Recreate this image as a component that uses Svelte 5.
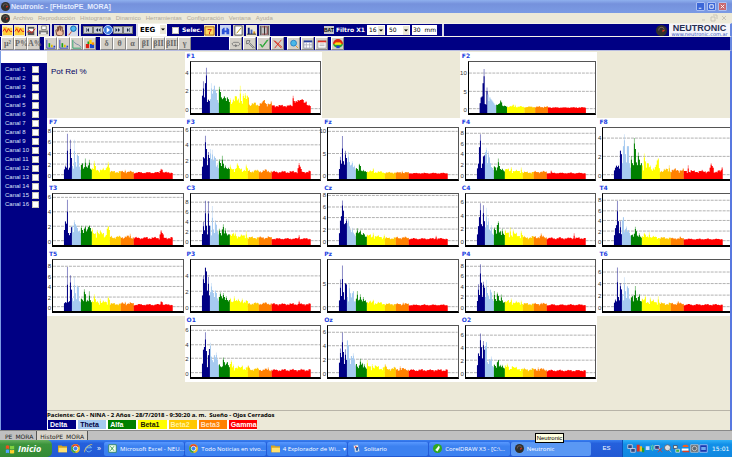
<script lang="ts">
	type Shape = [d: string, fill: string, stroke?: string];

	interface Channel {
		name: string;
		scale: number;
		step: number;
		low: string;
		tail: number[];
		peaks?: Record<number, number>;
	}

	const bands = [
		{ name: 'Delta', color: '#000084', text: '#ffffff', size: 8 },
		{ name: 'Theta', color: '#a6caf0', text: '#000040', size: 9 },
		{ name: 'Alfa', color: '#008000', text: '#ffffff', size: 11 },
		{ name: 'Beta1', color: '#ffff00', text: '#202000', size: 18 },
		{ name: 'Beta2', color: '#ffc800', text: '#fff3a0', size: 11 },
		{ name: 'Beta3', color: '#ff8000', text: '#ffe0c0', size: 13 },
		{ name: 'Gamma', color: '#ff0000', text: '#ffffff', size: 39 }
	];

	// scale is pixels per unit, low holds the delta, theta and alfa bins,
	// tail the mean level of beta1, beta2, beta3 and gamma
	const channels: (Channel | null)[] = [
		null,
		{ name: 'F1', scale: 9.3, step: 2, low: '1.4 3 1.2 2.8 4.5 .7 1 .8 1 2.8 1.6 2.1 2.5 2 1.7 .9 .6 2.4 1.8 1.2 1 1.1 1.3 1.1 .8 1.2 1 .7', tail: [1, 0.5, 0.6, 0.3], peaks: { 38: 2.5, 41: 1.6, 43: 1.7, 45: 1.4, 46: 1.2, 62: 0.9, 91: 1.4, 92: 0.8, 93: 0.6, 94: 0.8, 95: 0.7, 96: 0.9, 97: 0.8, 98: 0.9, 99: 0.9, 100: 1, 101: 0.9, 102: 0.6, 103: 0.6, 104: 0.8 } },
		null,
		{ name: 'F2', scale: 3.7, step: 5, low: '1.4 3 3.3 7 11 1.2 1 5.8 3.8 2 3 2.5 2.2 1.8 1.4 1 .8 1 .9 1.2 1.3 2.3 1.6 .7 .5 .7 .6 .4', tail: [0.5, 0.4, 0.4, 0.2], peaks: { 34: 1.1, 36: 1 } },
		null,
		{ name: 'F7', scale: 5.6, step: 2, low: '.9 1.6 1.2 7.5 .8 1.2 6.4 3 1.5 1 6.4 2.2 1.4 3.6 3.4 1.4 .8 1.7 2 1 1.3 2.9 1.4 1.2 1.6 2.7 1 .8', tail: [0.9, 0.5, 0.5, 0.35], peaks: { 30: 2.5, 31: 1.5, 42: 1.1, 44: 2.3, 43: 1.4, 45: 1.2, 61: 0.8, 96: 0.6, 97: 1, 98: 0.8 } },
		{ name: 'F3', scale: 7.7, step: 2, low: '1 2.3 2.1 5.2 3.4 1.2 3 2.2 3.4 2 3.3 1.8 2.4 2.2 1 1.5 .8 2 1.5 1.1 2.5 1.4 .8 1.2 .8 .7 .9 .7', tail: [0.8, 0.5, 0.5, 0.35], peaks: { 35: 1.5, 44: 1.3, 96: 0.8, 97: 1.5, 98: 1, 99: 0.7 } },
		{ name: 'Fz', scale: 4.5, step: 5, low: '1.2 4 2.4 8.8 3 2.2 5.4 3.7 2.7 5.2 2.8 2 2.2 3 1.6 2 1 1.4 1.2 .8 2.4 1.9 .8 .7 1 .6 .7 .5', tail: [0.6, 0.4, 0.4, 0.25], peaks: { 34: 1.4, 63: 0.8 } },
		{ name: 'F4', scale: 5.4, step: 2, low: '1.1 2 5.2 7.7 1.2 2 3.4 3.6 4.2 5.1 2.1 4.4 3.2 2.1 1.4 1.2 .8 1.6 1.3 .7 1.3 3 1.6 1 .8 1.1 .7 .5', tail: [0.7, 0.4, 0.5, 0.25], peaks: { 34: 1.4, 44: 1.3, 29: 1, 74: 0.7 } },
		{ name: 'F8', scale: 9.4, step: 2, low: '.4 .7 1 .8 1 .6 2.6 2.2 1.2 3.1 4.4 2.2 1.3 3.1 3.1 1.2 .7 2 1.2 1 4 2.8 1.3 1 2.4 1.6 1 1.2', tail: [0.9, 0.5, 0.5, 0.35], peaks: { 30: 2.3, 31: 1.4, 44: 1.8, 43: 1.5, 55: 1, 74: 1, 96: 0.7, 97: 1.2, 98: 0.9, 99: 0.7, 108: 0.8 } },
		{ name: 'T3', scale: 7.5, step: 2, low: '1.4 2.6 2.3 5.6 1 .7 1 1.8 2 1.1 2.8 2.2 2 1.7 1.2 1.3 1 2 1.4 1 1.6 2 1.2 1.5 1.8 2 1.7 1.2', tail: [1, 0.5, 0.5, 0.35], peaks: { 33: 1.4, 44: 1.9, 43: 1.6, 45: 1.4, 66: 0.9, 96: 0.8, 97: 1.4, 98: 1, 99: 0.8 } },
		{ name: 'C3', scale: 5, step: 2, low: '1.3 3.8 2 8.2 3 1.2 8.1 3 3 1 7.1 2.2 1.5 4.2 3.2 1.8 1.2 2.4 1.5 1 2.2 3.3 1.4 2.5 1.4 1 1.2 1.2', tail: [1, 0.6, 0.6, 0.35], peaks: { 44: 1.9, 33: 1.6, 97: 1.1 } },
		{ name: 'Cz', scale: 5.9, step: 2, low: '1.2 3.4 4.2 7 5.2 2.8 3 3.8 3 3.8 2.4 1.8 1.4 2.2 1.3 1 .7 1.3 2.1 1.2 1.4 1.8 1 .9 1.2 1 .6 .6', tail: [0.7, 0.4, 0.5, 0.3], peaks: { 34: 1.3, 45: 1, 97: 0.8 } },
		{ name: 'C4', scale: 6.6, step: 2, low: '.9 2.2 3.6 5.8 2.5 2.2 5.5 3 2 5.1 2.4 3.5 1.7 1.5 2.4 1 .8 2 1.6 1 2.4 3 1.2 1.5 .8 1.8 1 .8', tail: [1, 0.5, 0.6, 0.35], peaks: { 33: 2, 36: 1.7, 44: 1.5, 64: 1.1, 97: 1.1 } },
		{ name: 'T4', scale: 5.2, step: 2, low: '1 2.4 3 7.8 3.8 1.4 3.8 1.2 4 4.6 1.6 2.2 2.8 1.7 2 1.5 .9 1 1.1 .7 1.3 2.7 1.8 .9 .7 1.4 .7 .5', tail: [0.7, 0.5, 0.4, 0.25], peaks: { 30: 1.5, 35: 1.6, 66: 0.8 } },
		{ name: 'T5', scale: 5.2, step: 2, low: '.6 .8 .7 7.8 .8 1 6.2 3.3 1.6 1 5.9 2.6 1.4 4.1 3.8 1 .8 1.6 1.3 1 3.4 2.4 .9 1.3 1 3 1.2 .8', tail: [0.9, 0.5, 0.6, 0.35], peaks: { 30: 2.4, 36: 1.5, 44: 2, 45: 1.3, 61: 0.9, 97: 1, 98: 0.8 } },
		{ name: 'P3', scale: 8, step: 2, low: '1.4 4 3 5 4.5 2 3.8 1.4 1.8 3 2.1 1.7 1.2 2 1.7 1 .7 1.2 1.8 1.3 1 1.7 1.2 .8 1.3 .8 .6 .8', tail: [0.7, 0.4, 0.4, 0.3], peaks: { 32: 1.3, 40: 1, 97: 0.7 } },
		{ name: 'Pz', scale: 4.8, step: 5, low: '1.2 5.8 2.2 8.8 3 1.4 4.9 4.7 2 1 5 2.8 1.9 2.8 3.2 1 1 1.6 3.3 1.2 1.4 2.6 1.4 1 2 1.1 1.2 .8', tail: [0.8, 0.5, 0.5, 0.3], peaks: { 34: 1.4, 64: 0.8 } },
		{ name: 'P4', scale: 5.3, step: 2, low: '1 4.3 2.2 8.2 4.6 1.8 4.8 3.6 1.8 5.2 2.6 2 1.4 3.2 2.7 1.4 1 3 1.4 1 2.7 2 1.1 1 2.3 1.1 .7 .8', tail: [0.8, 0.5, 0.5, 0.3], peaks: { 34: 1.5, 44: 1.1, 64: 0.7 } },
		{ name: 'T6', scale: 6, step: 2, low: '.6 1.2 .8 6.7 1.6 1 4 2.9 2.1 1 5 2.6 1.4 3.4 3.1 1.3 1 1.5 1.7 .8 1.9 3.5 1.4 1 1.6 2.1 .9 .8', tail: [0.9, 0.5, 0.5, 0.3], peaks: { 31: 1.9, 36: 1.5, 44: 1.7, 64: 0.9 } },
		null,
		{ name: 'O1', scale: 7.3, step: 2, low: '1.2 3.2 3.6 5.7 3 .7 2.4 3.3 4.2 2.2 1.7 1.4 2.4 2.1 2.8 1.8 1 1.1 .8 .7 .8 2.1 1.4 1 1.2 1.4 1 .7', tail: [0.7, 0.5, 0.4, 0.35], peaks: { 29: 1.7, 31: 1.1, 40: 1, 46: 1, 66: 0.7 } },
		{ name: 'Oz', scale: 7, step: 2, low: '1.4 3.5 2.2 5.9 3 1.2 3.4 1.8 4.7 4 2 1.2 2.4 2.1 2.8 1.9 1 1.2 .8 .6 1 2 1.1 1.4 .7 1.2 .7 .5', tail: [0.8, 0.6, 0.5, 0.35], peaks: { 28: 1.8, 33: 1.2, 46: 1.2, 61: 0.9 } },
		{ name: 'O2', scale: 6.5, step: 2, low: '1.1 3 2.6 6.2 4 2.2 5 3.6 4.2 4.8 1.6 1.3 2.1 1.8 2.5 1 .8 1.2 1 .7 1.6 1.9 .9 1.2 .8 1.2 .7 .6', tail: [0.7, 0.5, 0.5, 0.3], peaks: { 30: 1.4, 35: 1, 61: 0.8 } },
		null
	];

	const ZERO = 48;
	const FLOOR = 53;
	const START = 11;

	function levels(ch: Channel): number[] {
		const values = ch.low.split(' ').map(Number);
		bands.slice(3).forEach((band, b) => {
			for (let i = 0; i < band.size; i++) {
				const n = values.length;
				const wave = 0.85 + 0.25 * Math.sin(n * 2.3) + 0.3 * Math.sin(n * 0.7 + ch.scale);
				const fade = b === 0 ? 1.2 - i * 0.022 : 1;
				values.push(ch.peaks?.[n] ?? ch.tail[b] * wave * fade);
			}
		});
		return values;
	}

	function bars(ch: Channel, solid: boolean) {
		const values = levels(ch);
		let n = 0;
		return bands.map((band) => {
			let d = '';
			for (let i = 0; i < band.size; i++, n++) {
				const near = Math.max(values[n - 1] ?? 0, values[n + 1] ?? 0);
				let v = values[n];
				if (solid && v > near * 1.2) v = (v + near) / 2;
				d += `M${START + n} ${FLOOR}V${(ZERO - v * ch.scale).toFixed(1)}h1V${FLOOR}z`;
			}
			return { color: band.color, d };
		});
	}

	function ticks(ch: Channel) {
		const list: { value: number; y: number }[] = [];
		for (let v = 0; v * ch.scale < ZERO; v += ch.step) {
			list.push({ value: v, y: Math.round(ZERO - v * ch.scale) });
		}
		return list;
	}

	const icons: Record<string, Shape[]> = {
		open: [['M0 0h12v12H0z', '#f4ecc8'], ['M1 2h4l1 1h5v8H1z', '#ffce3a'], ['M1 7l2-3 2 4 2-4 2 3h2', 'none', '#e02010']],
		folder: [['M0 2h5l1 1h6v8H0z', '#d6a520'], ['M1 5h11v6H1z', '#ffe070']],
		record: [['M0 0h12v12H0z', '#e8e4d8'], ['M2 2h7v9H2z', '#555'], ['M3 4h5v3H3z', '#fff'], ['M1 8l3-2 2 3 4-5', 'none', '#e02010']],
		print: [['M0 0h12v12H0z', '#e8e4d8'], ['M4 1h5v4H4z', '#fff', '#777'], ['M1 6h10v4H1z', '#777'], ['M3 8h6v2H3z', '#eee']],
		hand: [['M0 0h12v12H0z', '#d4d0c8'], ['M3 11L2 6l1-1 1 2V2h1v4l1-5h1v5l1-4h1v5l1-1v4l-2 2z', '#f0c0a0', '#704030']],
		zoom: [['M0 0h12v12H0z', '#d8dce8'], ['M5 7l-3 4', 'none', '#e04010'], ['M4 4a3 3 0 1 0 6 0a3 3 0 1 0-6 0', '#50b8f0', '#0860a8']],
		help: [['M0 0h12v12H0z', '#f8e8b8'], ['M1 2h10v9H1z', '#ffd860', '#a06010'], ['M4 5h4l-2 3v2', 'none', '#d01010']],
		blue: [['M0 0h12v12H0z', '#c8d4f0'], ['M2 10V5l2-2h1v3h2V3h1l2 2v5H7V8H5v2z', '#2850d8']],
		note: [['M0 0h12v12H0z', '#d4d0c8'], ['M2 1h8v10H2z', '#fff', '#555'], ['M4 9l5-6', 'none', '#b09000']],
		bars: [['M0 0h12v12H0z', '#ece9d8'], ['M2 3h2v7H2z', '#102080'], ['M5 5h2v5H5z', '#4060c0'], ['M8 7h2v3H8z', '#d09020'], ['M1 10h10', 'none', '#222']],
		film: [['M0 0h12v12H0z', '#c0c0c0'], ['M2 1v10M10 1v10M6 1v10', 'none', '#222'], ['M3 2h6v8H3', 'none', '#904040']],
		hist: [['M1 1v10h10', 'none', '#2030c0'], ['M3 5h2v5H3z', '#18a018'], ['M6 7h2v3H6z', '#e0c000'], ['M9 8h2v2H9z', '#2040d0']],
		curve: [['M1 1v10h10', 'none', '#18a060'], ['M2 3l3 3 3 1 3 3', 'none', '#7080a0']],
		mosaic: [['M1 6h4v5H1z', '#e02010'], ['M5 1h3v5H5z', '#ffd000'], ['M6 6h5v5H6z', '#1848d0'], ['M3 3h2v3H3z', '#18a020'], ['M8 4h3v3H8z', '#ff9000']],
		loop: [['M3 4h6l2 2-2 2H8M3 4L1 6l2 2h4', 'none', '#777'], ['M5 6l3 2-3 2z', '#777']],
		arrow: [['M2 2h4L5 4l6 6-1 1-6-6-2 1z', '#ddd', '#666']],
		check: [['M1 6l3 4 7-9', 'none', '#10a020'], ['M2 6l2 3 6-8', 'none', '#10a020']],
		cross: [['M2 2l9 8M10 1l-8 10M1 2l9 9', 'none', '#d82010']],
		search: [['M8 8l3 3', 'none', '#e09010'], ['M2 5a3 3 0 1 0 7 0a3 3 0 1 0-7 0', '#48b8e8', '#2078c0']],
		table: [['M1 2h10v9H1z', '#fff', '#8890a8'], ['M1 2h10v2H1z', '#2840a0'], ['M4 4v7M8 4v7M1 7h10', 'none', '#aab']],
		sheet: [['M1 2h10v9H1z', '#fff', '#999'], ['M1 2h10v2H1z', '#e03020'], ['M3 6h6M3 8h6', 'none', '#aaa']],
		head: [['M0 6a6 6 0 0 1 12 0z', '#e02810'], ['M3 4h6v3H3z', '#ffd800'], ['M0 6h12a6 6 0 0 1-3 4H3a6 6 0 0 1-3-4', '#20a830'], ['M4 8h4v3H4z', '#2040d0'], ['M2 5h8v2H2z', '#ffe020']],
		ball: [['M0 6a6 6 0 1 0 12 0a6 6 0 1 0-12 0', '#30302c'], ['M3 6a3 3 0 0 1 6-1', 'none', '#806860'], ['M7 5l3 1-3 2z', '#e03018']],
		chrome: [['M0 6a6 6 0 1 0 12 0a6 6 0 1 0-12 0', '#f0c020'], ['M1 3a6 6 0 0 1 10 0L6 6z', '#e04030'], ['M1 3a6 6 0 0 0 5 9V6z', '#30a050'], ['M3 6a3 3 0 1 0 6 0a3 3 0 1 0-6 0', '#3880f0', '#fff']],
		ie: [['M10 8a4 4 0 1 1 0-3H3', 'none', '#80d0ff'], ['M1 11C-1 8 8-1 11 1', 'none', '#ffd050']],
		excel: [['M1 1h10v10H1z', '#f0fff0', '#208040'], ['M3 3l5 6M8 3L3 9', 'none', '#108030']],
		cards: [['M2 2l6-1 2 9-6 1z', '#fff', '#6090d0'], ['M5 4h3v5H5z', '#2060b0'], ['M4 3h2v2H4z', '#e03020']],
		corel: [['M0 6a6 6 0 1 0 12 0a6 6 0 1 0-12 0', '#30a820'], ['M3 8l5-6 1 3-3 5z', '#f4fff0']],
		net: [['M1 1h6v5H1z', '#304880', '#dde'], ['M5 6h6v5H5z', '#304880', '#dde']],
		flags: [['M1 1h4v9H1z', '#e03020'], ['M5 3h3v7H5z', '#f0c020'], ['M8 5h3v6H8z', '#20a030']],
		signal: [['M1 3h5v5H1z', '#c8e0ff'], ['M8 2q2 3 0 6M10 1q3 4 0 8', 'none', '#80f080']],
		offline: [['M1 2h6v5H1z', '#283878', '#dde'], ['M5 5l6 6M11 5l-6 6', 'none', '#f03020']],
		sound: [['M2 5a4 4 0 1 1 8 0a4 4 0 1 1-8 0', '#e0e0e0', '#556'], ['M6 5l5 6', 'none', '#ccc']],
		usb: [['M2 2h5v4H2z', '#e0e8e0', '#445'], ['M5 7h5v4H5z', '#40b040', '#dde']],
		java: [['M2 4a4 3 0 0 1 8 0z', '#f06020'], ['M1 6h9v3H1z', '#fff'], ['M2 9h9v2H2z', '#e04020']],
		disc: [['M1 1h10v10H1z', '#606870', '#d0d0d0'], ['M3 6a3 3 0 1 0 6 0a3 3 0 1 0-6 0', 'none', '#ddd']],
		screen: [['M1 1h10v10H1z', '#1838b0', '#b8d0ff'], ['M3 4h6v4H3z', '#70a8f0']]
	};

	const menus = ['Archivo', 'Reproducción', 'Histograma', 'Dinamico', 'Herramientas', 'Configuración', 'Ventana', 'Ayuda'];
	const greek = ['δ', 'θ', 'α', 'βI', 'βII', 'βIII', 'γ'];
	const units = ['µ²', 'P%', 'A%'];
	const media = ['M8 2L4 6l4 4zM3 2h1v8H3z', 'M6 2L2 6l4 4zM11 2L7 6l4 4z', 'M4 2l5 4-5 4z', 'M1 2l4 4-4 4zM6 2l4 4-4 4z', 'M4 2l4 4-4 4zM9 2h1v8H9z'];
	const tasks = [
		{ icon: 'excel', label: 'Microsoft Excel - NEU...' },
		{ icon: 'chrome', label: 'Todo Noticias en vivo...' },
		{ icon: 'folder', label: '4 Explorador de Wi...', group: true },
		{ icon: 'cards', label: 'Solitario' },
		{ icon: 'corel', label: 'CorelDRAW X3 - [C:\\...' },
		{ icon: 'ball', label: 'Neutronic', active: true }
	];
	const tray = ['net', 'flags', 'signal', 'offline', 'sound', 'usb', 'java', 'disc', 'screen'];
</script>

{#snippet icon(name: string)}
	<svg class="icon" viewBox="0 0 12 12" aria-hidden="true">
		{#each icons[name] as [d, fill, stroke]}
			<path {d} {fill} stroke={stroke ?? 'none'} />
		{/each}
	</svg>
{/snippet}

{#snippet tool(name: string)}
	<button type="button" class="tool" aria-label={name}>{@render icon(name)}</button>
{/snippet}

<div class="window">
	<header class="title-bar">
		{@render icon('ball')}
		<h1>Neutronic - [FHistoPE_MORA]</h1>
		<div class="controls">
			<button type="button" aria-label="Minimizar"><svg viewBox="0 0 8 8"><path d="M2 6h3" /></svg></button>
			<button type="button" aria-label="Restaurar"><svg viewBox="0 0 8 8"><path d="M2 2h4v4H2z" /></svg></button>
			<button type="button" class="close" aria-label="Cerrar"><svg viewBox="0 0 8 8"><path d="M2 2l4 4M6 2L2 6" /></svg></button>
		</div>
	</header>

	<nav class="menu-bar">
		{@render icon('ball')}
		{#each menus as menu}
			<button type="button">{menu}</button>
		{/each}
		<div class="child-controls">
			<svg viewBox="0 0 8 8"><path d="M2 6h3" /></svg>
			<svg viewBox="0 0 8 8"><path d="M1 3h4v4H1zM3 1h4v4" /></svg>
			<svg viewBox="0 0 8 8"><path d="M2 2l4 4M6 2L2 6" /></svg>
		</div>
	</nav>

	<div class="toolbar">
		<div class="group files">
			{@render tool('open')}{@render tool('open')}
			{@render tool('record')}{@render tool('print')}
		</div>
		<div class="group view">{@render tool('hand')}{@render tool('zoom')}</div>
		<div class="group media">
			{#each media as d, i}
				<button type="button" class:play={i === 2} aria-label="Control {i + 1}">
					<svg viewBox="0 0 12 12"><path {d} /></svg>
				</button>
			{/each}
		</div>
		<label class="combo signal">
			<select aria-label="Señal"><option>EEG</option></select>
			<svg viewBox="0 0 6 3"><path d="M0 0h6L3 3z" /></svg>
		</label>
		<div class="group selection">
			<label><input type="checkbox" /> Selec.</label>
			{@render tool('help')}
		</div>
		<div class="group panels">
			{@render tool('blue')}{@render tool('note')}{@render tool('bars')}{@render tool('film')}
		</div>
		<div class="group filter">
			<button type="button" class="bat">BAT</button>
			<span>Filtro X1</span>
			<label class="combo small">
				<select aria-label="Filtro"><option>16</option></select>
				<svg viewBox="0 0 6 3"><path d="M0 0h6L3 3z" /></svg>
			</label>
			<label class="combo medium">
				<select aria-label="Ganancia"><option>50</option></select>
				<svg viewBox="0 0 6 3"><path d="M0 0h6L3 3z" /></svg>
			</label>
			<input class="speed" type="text" value="30  mm" aria-label="Velocidad" />
		</div>
		<div class="group brand">
			{@render icon('ball')}
			<div class="logo"><strong>NEUTRONIC</strong><a href="#site">www.neutronic.com.ar</a></div>
		</div>
	</div>

	<div class="toolbar second">
		<div class="set">
			{#each units as unit}<button type="button" class="key">{unit}</button>{/each}
		</div>
		<div class="set">
			{@render tool('hist')}{@render tool('hist')}{@render tool('curve')}{@render tool('mosaic')}
		</div>
		<div class="set">
			{#each greek as letter}<button type="button" class="key">{letter}</button>{/each}
		</div>
		<div class="set actions">
			{@render tool('loop')}{@render tool('arrow')}{@render tool('check')}{@render tool('cross')}
		</div>
		<div class="set reports">
			{@render tool('search')}{@render tool('table')}{@render tool('sheet')}
		</div>
		<div class="set">{@render tool('head')}</div>
	</div>

	<div class="workspace">
		<aside>
			<div class="blank"></div>
			{#each { length: 16 } as _, i}
				<label>Canal {i + 1}<input type="checkbox" /></label>
			{/each}
		</aside>

		<main>
			<div class="charts">
				{#each channels as ch, i}
					{#if ch}
						<section class="chart" class:wide={ch.name === 'F2'}>
							<h2>{ch.name}</h2>
							<div class="axis">
								{#each ticks(ch) as tick}
									<span style:top="{tick.y}px">{tick.value}</span>
								{/each}
							</div>
							<svg class="plot" viewBox="0 0 130 53" preserveAspectRatio="none">
								{#each ticks(ch) as tick}
									<path class="rule" d="M0 {tick.y + 0.5}H130" />
								{/each}
								{#each bars(ch, false) as band}
									<path d={band.d} fill={band.color} opacity="0.45" />
								{/each}
								{#each bars(ch, true) as band}
									<path d={band.d} fill={band.color} />
								{/each}
							</svg>
						</section>
					{:else}
						<div class="empty">{#if i === 0}Pot Rel %{/if}</div>
					{/if}
				{/each}
			</div>

			<footer>
				<p>Paciente: GA - NINA - 2 Años - 28/7/2018 - 9:30:20 a. m. &nbsp;Sueño - Ojos Cerrados</p>
				<ul>
					{#each bands as band}
						<li style:background={band.color} style:color={band.text}>{band.name}</li>
					{/each}
				</ul>
			</footer>
		</main>
	</div>

	<div class="tabs">
		<button type="button">PE_MORA</button>
		<button type="button" class="active">HistoPE_MORA</button>
	</div>

	<div class="taskbar">
		<button type="button" class="start">
			<svg viewBox="0 0 12 12" aria-hidden="true">
				<path d="M1 2q2-1 4 0v4q-2-1-4 0z" fill="#f05020" />
				<path d="M6 2q2 1 5 0v4q-3 1-5 0z" fill="#80d040" />
				<path d="M1 7q2-1 4 0v4q-2-1-4 0z" fill="#50a0ff" />
				<path d="M6 7q2 1 5 0v4q-3 1-5 0z" fill="#ffd030" />
			</svg>
			Inicio
		</button>
		<div class="quick">
			{@render icon('folder')}{@render icon('chrome')}{@render icon('ie')}<span>»</span>
		</div>
		<div class="tasks">
			{#each tasks as task}
				<button type="button" class:active={task.active}>
					{@render icon(task.icon)}
					<span>{task.label}</span>
					{#if task.group}<i>▾</i>{/if}
					{#if task.active}<em role="tooltip">Neutronic</em>{/if}
				</button>
			{/each}
		</div>
		<span class="lang">ES</span>
		<div class="tray">
			{#each tray as name}{@render icon(name)}{/each}
			<time>15:01</time>
		</div>
	</div>
</div>

<style>
	:global(body) {
		margin: 0;
		background: #ece9d8;
	}

	.window {
		display: flex;
		flex-direction: column;
		min-height: 100vh;
		overflow: hidden;
		font: 7px/9px 'Liberation Sans', sans-serif;
	}

	.window * {
		box-sizing: border-box;
	}

	button,
	input,
	select {
		margin: 0;
		padding: 0;
		border: 0;
		border-radius: 0;
		font: inherit;
		color: inherit;
		background: none;
	}

	svg {
		display: block;
		flex: none;
	}

	.icon {
		width: 9px;
		height: 9px;
	}

	.title-bar {
		display: flex;
		align-items: center;
		gap: 1px;
		height: 13px;
		padding: 0 5px 0 1px;
		background: linear-gradient(#8fb0ee, #7591dc 30%, #7b9be4);
		color: #e4ecff;
	}

	h1 {
		flex: 1;
		margin: 0;
		font: bold 7px/12px 'Liberation Sans', sans-serif;
	}

	.controls {
		display: flex;
		gap: 2px;
	}

	.controls button {
		width: 9px;
		height: 9px;
		border: 1px solid #aac0f4;
		border-radius: 1px;
		background: #3c67d8;
	}

	.controls .close {
		background: #c86870;
	}

	.controls svg {
		width: 7px;
		height: 7px;
	}

	.controls path {
		fill: none;
		stroke: #fff;
	}

	.menu-bar {
		display: flex;
		align-items: center;
		gap: 5px;
		height: 10px;
		padding: 0 4px 0 1px;
		background: #ece9d8;
		color: #aca899;
		font: 6px/9px 'Liberation Sans', sans-serif;
	}

	.menu-bar .icon {
		margin-right: -2px;
	}

	.child-controls {
		display: flex;
		gap: 2px;
		margin-left: auto;
	}

	.child-controls svg {
		width: 8px;
		height: 8px;
		fill: none;
		stroke: #c8c5b8;
	}

	.toolbar {
		display: flex;
		height: 13px;
		background: #000084;
		border-top: 1px solid #f4f2e8;
		border-right: 2px solid #6888e0;
		color: #fff;
	}

	.group {
		display: flex;
		align-items: center;
		gap: 2px;
		padding: 0 2px;
		border-right: 2px solid #d8d8e8;
	}

	.tool {
		width: 11px;
		height: 11px;
	}

	.tool .icon {
		width: 11px;
		height: 11px;
	}

	.files {
		width: 52px;
		gap: 1px;
	}

	.view {
		width: 29px;
	}

	.media {
		width: 57px;
		gap: 0;
	}

	.media button {
		width: 10px;
		height: 8px;
		border: 1px solid #777;
		background: #c8ccd4;
	}

	.media svg {
		width: 8px;
		height: 6px;
		fill: #102040;
	}

	.media .play {
		height: 10px;
		border: 1px solid #c0d8ff;
		border-radius: 5px;
		background: #3878e0;
	}

	.media .play svg {
		height: 8px;
		fill: #fff;
	}

	.combo {
		position: relative;
		display: flex;
		background: #fff;
		color: #000;
	}

	.combo select {
		appearance: none;
		width: 100%;
		padding-left: 2px;
	}

	.combo svg {
		position: absolute;
		top: 1px;
		right: 1px;
		width: 6px;
		height: 9px;
		padding: 3px 1px;
		background: #ece9d8;
	}

	.signal {
		width: 29px;
		font: bold 7px/11px 'DejaVu Sans', sans-serif;
	}

	.selection {
		width: 50px;
		padding-left: 5px;
		border-right-color: #000084;
		font: bold 6px/10px 'DejaVu Sans', sans-serif;
	}

	.selection label {
		display: flex;
		flex: 1;
		align-items: center;
		gap: 3px;
	}

	input[type='checkbox'] {
		appearance: none;
		width: 7px;
		height: 7px;
		background: #fff;
		border: 1px solid #c8c4b8;
	}

	.panels {
		padding-left: 2px;
		border-left: 1px solid #d8d8e8;
		border-right: 0;
	}

	.filter {
		width: 122px;
		margin-left: 50px;
		font: bold 6px/10px 'DejaVu Sans', sans-serif;
	}

	.filter .combo,
	.speed {
		height: 10px;
		font: 6px/10px 'DejaVu Sans', sans-serif;
	}

	.bat {
		height: 8px;
		background: #c8c8c8;
		color: #000;
		font: bold 5px/8px 'Liberation Sans', sans-serif;
	}

	.small {
		width: 18px;
	}

	.medium {
		width: 23px;
	}

	.speed {
		width: 25px;
		padding-left: 1px;
		background: #fff;
		color: #000;
		white-space: pre;
	}

	.brand {
		flex: 1;
		justify-content: flex-end;
		padding: 0;
		border: 0;
	}

	.brand .icon {
		width: 11px;
		height: 11px;
	}

	.logo {
		width: 61px;
		height: 12px;
		background: #f4f4fa;
		text-align: center;
	}

	.logo strong {
		display: block;
		color: #283050;
		font: bold 9px/8px 'Liberation Sans', sans-serif;
	}

	.logo a {
		display: block;
		color: #3050c0;
		font: 5px/4px 'DejaVu Sans', sans-serif;
		text-decoration: none;
	}

	.second {
		height: 15px;
		padding-left: 1px;
		border-bottom: 1px solid #b8bce0;
	}

	.set {
		display: flex;
		margin-right: 4px;
	}

	.actions {
		gap: 1px;
		margin: 0 3px 0 34px;
	}

	.reports {
		gap: 1px;
		margin-right: 3px;
	}

	.second .tool,
	.key {
		display: grid;
		place-items: center;
		width: 13px;
		height: 13px;
		border: 1px solid #fff;
		border-right-color: #888;
		border-bottom-color: #888;
		background: #d4d0c8;
		color: #666;
		font: bold 8px/10px 'Liberation Serif', serif;
	}

	.second .tool .icon {
		width: 10px;
		height: 10px;
	}

	.workspace {
		display: flex;
		flex: 1;
		border-left: 1px solid #7b9be4;
		border-right: 2px solid #5878e0;
	}

	aside {
		width: 46px;
		background: #000084;
		color: #dce2fc;
	}

	.blank {
		height: 12px;
		margin-bottom: 2px;
		background: #fff;
	}

	aside label {
		display: flex;
		align-items: center;
		justify-content: space-between;
		height: 9px;
		padding: 0 8px 0 4px;
		font-size: 6px;
	}

	main {
		display: flex;
		flex: 1;
		flex-direction: column;
		justify-content: space-between;
		min-width: 0;
		overflow: hidden;
		background: #ece9d8;
	}

	.charts {
		display: grid;
		grid-template-columns: repeat(5, 1fr);
		grid-auto-rows: 66px;
		margin: 1px -5px 0 0;
	}

	.chart {
		display: grid;
		grid-template: 9px 54px / 5px 1fr;
		padding-right: 1px;
		background: #fff;
	}

	.wide {
		grid-template-columns: 8px 1fr;
	}

	h2 {
		grid-column: 1 / -1;
		margin: 0;
		padding-left: 2px;
		color: #2040e0;
		font: bold 6px/8px 'DejaVu Sans', sans-serif;
	}

	.axis {
		position: relative;
		color: #333;
		font-size: 6px;
	}

	.axis span {
		position: absolute;
		right: 1px;
		line-height: 6px;
		margin-top: -2px;
	}

	.plot {
		width: 100%;
		height: 54px;
		border: 1px solid #555;
		border-left-color: #000;
		border-bottom: 2px solid #000;
	}

	.rule {
		stroke: #b0b0b0;
		stroke-dasharray: 3 1;
	}

	.empty {
		padding: 15px 4px;
		color: #000060;
		font: 8px/10px 'Liberation Sans', sans-serif;
	}

	footer {
		border-top: 1px solid #b8b4a8;
	}

	footer p {
		margin: 0;
		color: #000;
		font: bold 6px/9px 'Open Sans', sans-serif;
	}

	footer ul {
		display: flex;
		gap: 2px;
		width: 210px;
		margin: 0;
		padding: 0 0 1px 1px;
		background: #fff;
		list-style: none;
	}

	footer li {
		flex: 1;
		padding-left: 2px;
		font: bold 7px/9px 'Liberation Sans', sans-serif;
	}

	.tabs {
		display: flex;
		height: 10px;
		padding-left: 2px;
		overflow: hidden;
		border-top: 1px solid #888;
		background: #c0c0c0;
		color: #222;
		font: 6px/12px 'DejaVu Sans', sans-serif;
	}

	.tabs button {
		padding: 0 3px;
		border-right: 1px solid #555;
		white-space: nowrap;
	}

	.tabs .active {
		background: #d8d4cc;
	}

	.taskbar {
		display: flex;
		align-items: center;
		height: 17px;
		background: linear-gradient(#3a80f0, #2560dc 20%, #2259d4);
		color: #fff;
	}

	.start {
		display: flex;
		align-items: center;
		gap: 3px;
		width: 52px;
		height: 17px;
		padding-left: 5px;
		border-radius: 0 5px 5px 0;
		background: linear-gradient(#66b060, #3c943c 25%, #338a34);
		font: italic bold 9px/14px 'Open Sans', sans-serif;
	}

	.start svg {
		width: 10px;
		height: 10px;
	}

	.quick {
		display: flex;
		align-items: center;
		gap: 4px;
		width: 52px;
		padding-left: 6px;
	}

	.tasks {
		display: flex;
		flex: 1;
		gap: 1px;
		min-width: 0;
	}

	.tasks button {
		position: relative;
		display: flex;
		flex: 1;
		align-items: center;
		gap: 3px;
		min-width: 0;
		height: 14px;
		padding: 0 4px;
		border-radius: 2px;
		background: linear-gradient(#5898ff, #3c81f0 30%);
		font: 6px/10px 'Open Sans', sans-serif;
		white-space: nowrap;
	}

	.tasks .active {
		background: #5a98f4;
	}

	.tasks i {
		margin-left: auto;
		font-style: normal;
	}

	.tasks em {
		position: absolute;
		bottom: 13px;
		left: 24px;
		padding: 0 1px;
		border: 1px solid #000;
		background: #ffffe1;
		color: #000;
		font: 6px/8px 'Liberation Sans', sans-serif;
	}

	.lang {
		width: 31px;
		font-size: 6px;
		text-align: center;
	}

	.tray {
		display: flex;
		align-items: center;
		width: 110px;
		height: 17px;
		padding-left: 4px;
		border-left: 1px solid #0a50b8;
		background: linear-gradient(#30b0f8, #1290e8 25%, #1088e0);
	}

	time {
		margin-left: 4px;
		font: 6px/10px 'DejaVu Sans', sans-serif;
	}
</style>
